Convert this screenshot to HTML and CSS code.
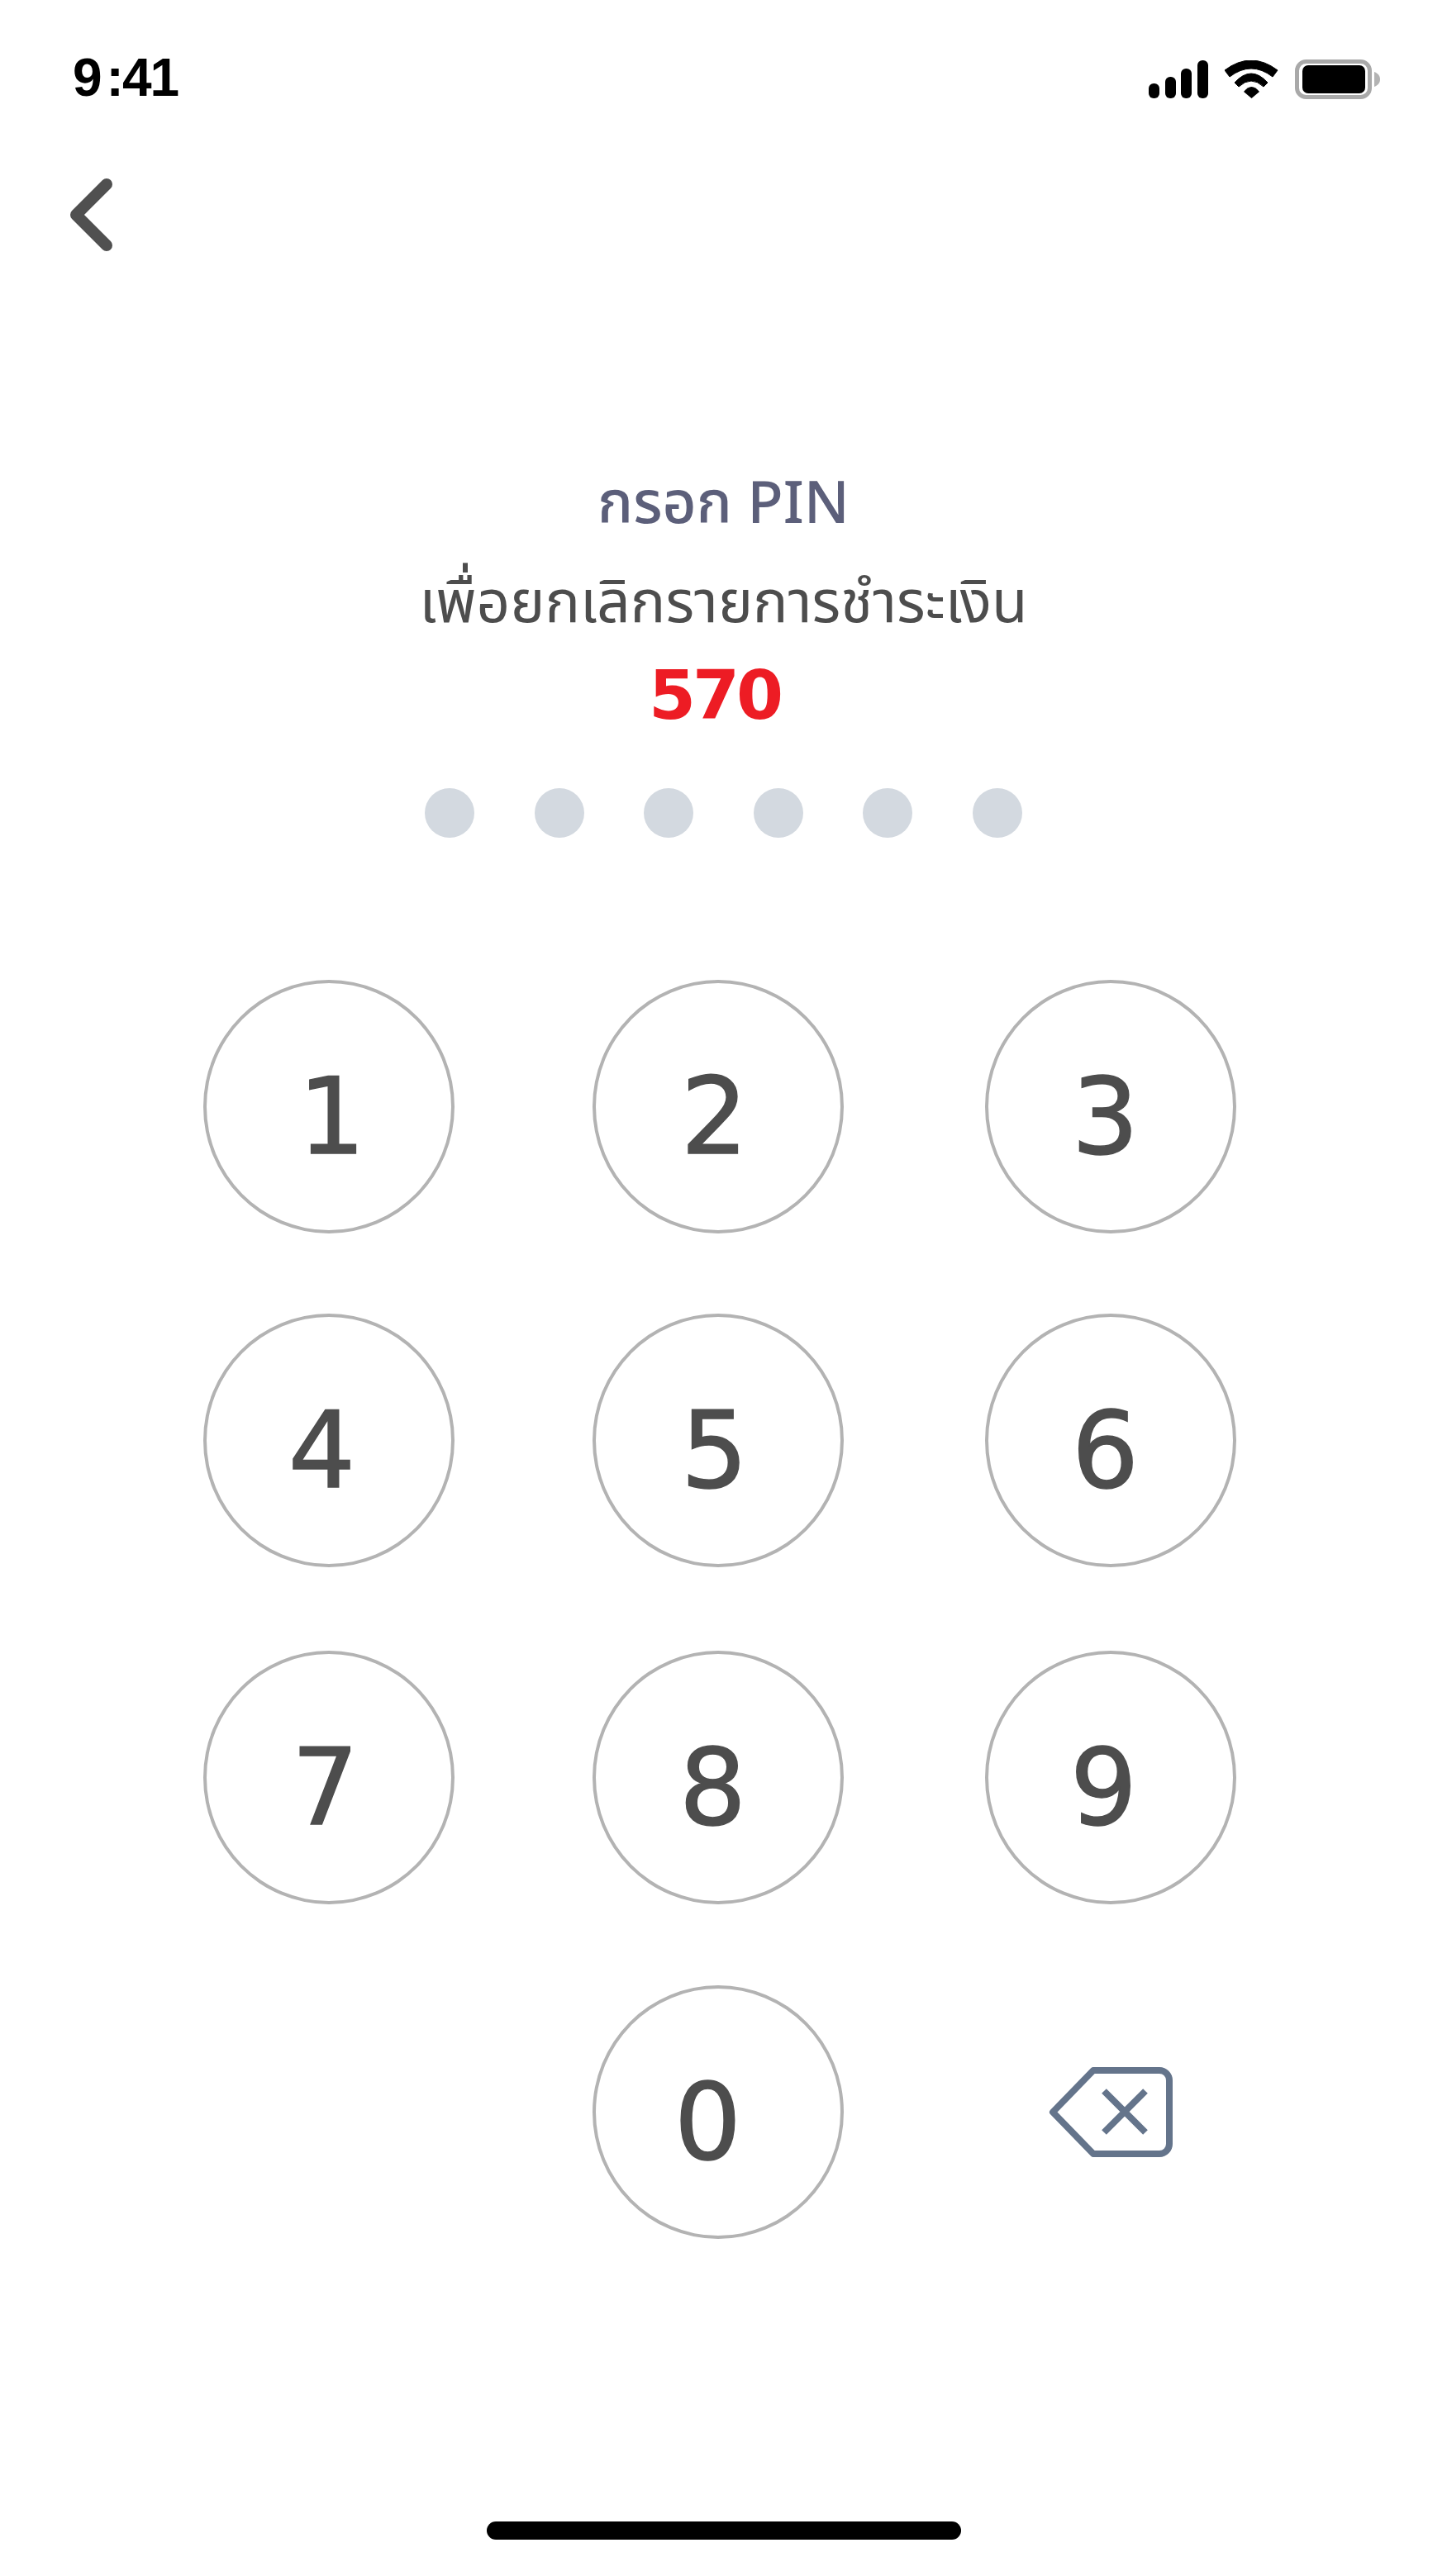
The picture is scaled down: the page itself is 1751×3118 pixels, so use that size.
FILE: index.html
```html
<!DOCTYPE html>
<html lang="th">
<head>
<meta charset="utf-8">
<title>PIN</title>
<link rel="stylesheet" href="styles.css">
</head>
<body>
<div class="screen">
  <div class="status">
    <span class="time">9<span class="colon">:</span>41</span>
    <div class="status-icons">
      <svg class="signal" viewBox="0 0 72 46"><rect x="0" y="28" width="13" height="18" rx="6"/><rect x="20" y="20" width="13" height="26" rx="6"/><rect x="39" y="10" width="13" height="36" rx="6"/><rect x="59" y="0" width="13" height="46" rx="6"/></svg>
      <svg class="wifi" viewBox="0 0 65 46"><path d="M0 12 Q32 -12 64 12 L58 20 Q32 0 6 20 Z" stroke="#000" stroke-width="1" stroke-linejoin="round"/><path d="M12 27 Q32 5 52 27 L47 32 Q32 18 17 32 Z" stroke="#000" stroke-width="1" stroke-linejoin="round"/><path d="M23 38 Q32.5 26 42 38 L32.5 46 Z"/></svg>
      <svg class="battery" viewBox="0 0 103 48"><rect x="2.5" y="2.5" width="88" height="43" rx="11" fill="none" stroke="#a9a9a9" stroke-width="5"/><rect x="9" y="7" width="76" height="34" rx="7"/><path d="M96 15 C101 17 103 20 103 24 C103 28 101 31 96 33 Z" fill="#b3b3b3"/></svg>
    </div>
  </div>
  <div class="nav">
    <svg class="back" viewBox="0 0 54 90"><path d="M45 8 L8 45 L45 82" fill="none" stroke="#505050" stroke-width="14" stroke-linecap="round" stroke-linejoin="round"/></svg>
  </div>
  <h1 class="title">กรอก PIN</h1>
  <p class="sub">เพื่อยกเลิกรายการชำระเงิน</p>
  <p class="amount">570</p>
  <div class="dots"><i></i><i></i><i></i><i></i><i></i><i></i></div>
  <div class="pad">
    <button class="key k1">1</button><button class="key k2">2</button><button class="key k3">3</button>
    <button class="key k4">4</button><button class="key k2">5</button><button class="key k3">6</button>
    <button class="key k5">7</button><button class="key k3">8</button><button class="key k4">9</button>
    <span></span><button class="key k0">0</button>
    <div class="del"><svg viewBox="0 0 150 109"><path d="M54 4 H134 A12 12 0 0 1 146 16 V93 A12 12 0 0 1 134 105 H54 L5 54.5 Z" fill="none" stroke="#64748b" stroke-width="8" stroke-linejoin="round"/><path d="M67 29 L117 79 M117 29 L67 79" stroke="#64748b" stroke-width="8" fill="none"/></svg></div>
  </div>
  <div class="home"></div>
</div>
</body>
</html>
```

FILE: styles.css
```css
* { box-sizing: border-box; }
html, body { margin: 0; padding: 0; background: #fff; }
.screen { width: 1751px; height: 3118px; position: relative; font-family: "Noto Sans Thai", "Noto Sans", "DejaVu Sans", sans-serif; display: flex; flex-direction: column; align-items: center; }
.status { width: 100%; height: 100px; padding: 59px 0 0 88px; display: flex; justify-content: space-between; align-items: flex-start; }
.time { font: 700 64px/70px "Liberation Sans", sans-serif; letter-spacing: -2px; color: #000; }
.colon { margin-left: 7px; }
.status-icons { display: flex; gap: 20px; margin-right: 81px; margin-top: 13px; align-items: center; }
.signal { width: 72px; height: 46px; }
.wifi { width: 65px; height: 46px; }
.battery { width: 103px; height: 48px; }
.nav { width: 100%; height: 470px; padding: 115px 0 0 84px; }
.back { width: 54px; height: 90px; display: block; }
.title { margin: 0; font: 500 71px/84px "Noto Sans Thai", "Noto Sans", sans-serif; color: #5c5f7a; }
.sub { margin: 36px 0 0; font: 400 71px/84px "Noto Sans Thai", "Noto Sans", sans-serif; color: #4d4d4d; }
.amount { margin: 18px 22px 0 0; font: 700 82px/100px "DejaVu Sans", sans-serif; letter-spacing: -4px; color: #ed1c24; }
.dots { display: flex; gap: 72.5px; margin-top: 62px; }
.dots i { width: 60px; height: 60px; border-radius: 50%; background: #d3d9e0; }
.pad { display: grid; grid-template-columns: 471px 475px 304px; grid-template-rows: 404px 408px 405px 307px; margin-top: 172px; margin-left: -10px; }
.key { width: 304px; height: 307px; border-radius: 50%; border: 4px solid #b3b3b3; background: #fff; font: 400 128px/1 "DejaVu Sans", sans-serif; -webkit-text-stroke: 1.5px #4d4d4d; color: #4d4d4d; padding: 24px 0 0; }
.k1 { padding-left: 8px; }
.k2 { padding-right: 8px; }
.k3 { padding-right: 12px; }
.k4 { padding-right: 16px; }
.k5 { padding-right: 8px; }
.k0 { padding-right: 24px; }
.del { display: flex; align-items: center; justify-content: center; }
.del svg { width: 150px; height: 109px; }
.home { position: absolute; left: 589px; top: 3052px; width: 574px; height: 22px; border-radius: 11px; background: #000; }
```
